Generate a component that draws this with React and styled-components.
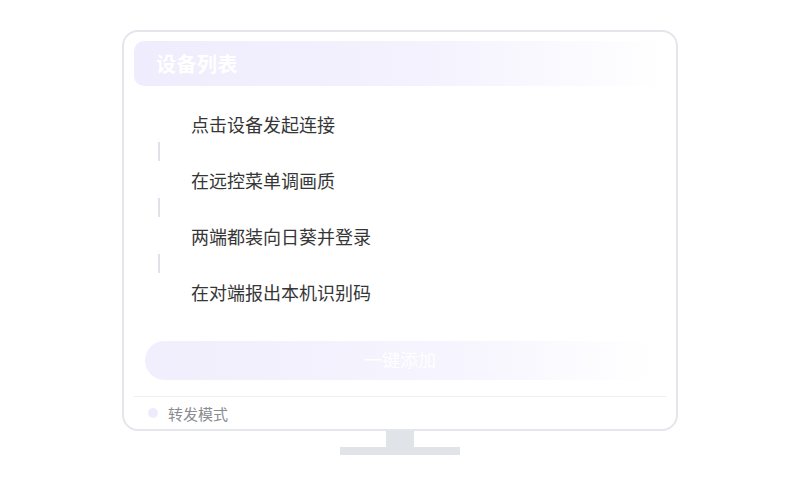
import React from 'react';
import styled, { createGlobalStyle } from 'styled-components';

const GlobalStyle = createGlobalStyle`
  html, body {
    margin: 0;
    padding: 0;
    background: #ffffff;
  }
  body {
    font-family: "Noto Sans CJK SC", "Noto Sans", sans-serif;
  }
`

const Page = styled.div`
  width: 800px;
  height: 500px;
  display: flex;
  flex-direction: column;
  align-items: center;
  padding-top: 30px;
  box-sizing: border-box;
`
const Screen = styled.section`
  width: 556px;
  height: 401px;
  box-sizing: border-box;
  border: 2px solid #e3e6eb;
  border-radius: 16px;
  background: #ffffff;
  padding: 9px 10px 0 10px;
  display: flex;
  flex-direction: column;
`
const Header = styled.div`
  height: 45px;
  border-radius: 10px;
  background: linear-gradient(90deg, #efecfd 0%, #f4f2fe 55%, rgba(255, 255, 255, 0) 100%);
  display: flex;
  align-items: center;
  padding-left: 22px;
`
const Title = styled.h2`
  margin: 0;
  font-size: 20px;
  font-weight: 700;
  color: #ffffff;
  letter-spacing: 0.5px;
`
const Steps = styled.ul`
  list-style: none;
  margin: 20px 0 0;
  padding: 0 0 0 24px;
  display: flex;
  flex-direction: column;
`
const Step = styled.li`
  height: 36px;
  line-height: 36px;
  padding-left: 33px;
  font-size: 18px;
  color: #363636;
`
const Connector = styled.li`
  width: 2px;
  height: 19px;
  margin-bottom: 1px;
  background: #dfe2e8;
`
const AddButton = styled.button`
  margin: 31px 11px 0 11px;
  height: 39px;
  padding: 0 0 3px;
  border: none;
  border-radius: 20px;
  background: linear-gradient(90deg, #f1eefd 0%, #f6f4fe 60%, rgba(255, 255, 255, 0) 100%);
  color: #ffffff;
  font-family: inherit;
  font-size: 18px;
  line-height: 1;
  cursor: pointer;
`
const Divider = styled.hr`
  margin: 16px 0 0;
  border: none;
  border-top: 1px solid #eeeff2;
`
const Footer = styled.div`
  flex: 1;
  display: flex;
  align-items: center;
  gap: 10px;
  padding-left: 14px;
`
const Dot = styled.span`
  width: 10px;
  height: 10px;
  border-radius: 50%;
  background: #eeebfc;
`
const Mode = styled.span`
  font-size: 15px;
  color: #8a8c90;
`
const Neck = styled.div`
  width: 28px;
  height: 16px;
  background: #e0e4e8;
`
const Base = styled.div`
  width: 120px;
  height: 8px;
  background: #e0e4e8;
`

const steps = ['点击设备发起连接', '在远控菜单调画质', '两端都装向日葵并登录', '在对端报出本机识别码'];

export default () => {
  return (
    <Page>
      <GlobalStyle />
      <Screen>
        <Header>
          <Title>设备列表</Title>
        </Header>
        <Steps>
          {steps.map((s, i) => (
            <React.Fragment key={s}>
              {i > 0 && <Connector />}
              <Step>{s}</Step>
            </React.Fragment>
          ))}
        </Steps>
        <AddButton>一键添加</AddButton>
        <Divider />
        <Footer>
          <Dot />
          <Mode>转发模式</Mode>
        </Footer>
      </Screen>
      <Neck />
      <Base />
    </Page>
  )
}
